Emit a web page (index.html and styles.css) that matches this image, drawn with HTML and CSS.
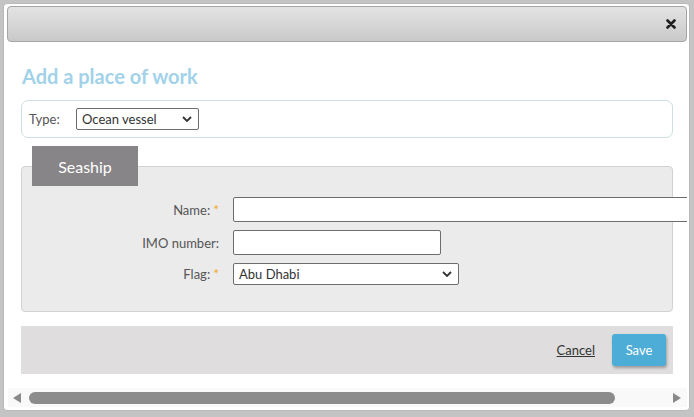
FILE: index.html
```html
<!DOCTYPE html>
<html lang="en">
<head>
    <meta charset="UTF-8">
    <meta name="viewport" content="width=device-width, initial-scale=1.0">
    <title>Add a place of work</title>
    <link rel="stylesheet" href="styles.css">
</head>
<body>
    <div class="dialog">
        <div class="titlebar">
            <button class="close-btn" title="Close">
                <svg width="10" height="10" viewBox="0 0 10 10">
                    <path d="M1.5 1.5 L8.5 8.5 M8.5 1.5 L1.5 8.5" stroke="#1e1e1e" stroke-width="2.6" stroke-linecap="round"/>
                </svg>
            </button>
        </div>

        <div class="dialog-content">
            <div class="content-inner">
                <h2 class="dialog-title">Add a place of work</h2>

                <div class="type-box">
                    <label class="type-label">Type:</label>
                    <div class="select-wrap type-select">
                        <select>
                            <option>Ocean vessel</option>
                        </select>
                        <svg class="chevron" width="10" height="6" viewBox="0 0 10 6">
                            <path d="M1 1 L5 5 L9 1" fill="none" stroke="#333" stroke-width="1.8"/>
                        </svg>
                    </div>
                </div>

                <div class="section-tab">Seaship</div>
                <div class="section-panel">
                    <div class="form-row">
                        <label class="form-label">Name: <span class="req">*</span></label>
                        <input class="text-input name-input" type="text">
                    </div>
                    <div class="form-row">
                        <label class="form-label">IMO number:</label>
                        <input class="text-input imo-input" type="text">
                    </div>
                    <div class="form-row">
                        <label class="form-label">Flag: <span class="req">*</span></label>
                        <div class="select-wrap flag-select">
                            <select>
                                <option>Abu Dhabi</option>
                            </select>
                            <svg class="chevron" width="10" height="6" viewBox="0 0 10 6">
                                <path d="M1 1 L5 5 L9 1" fill="none" stroke="#333" stroke-width="1.8"/>
                            </svg>
                        </div>
                    </div>
                </div>

                <div class="dialog-footer">
                    <a href="#" class="cancel-link">Cancel</a>
                    <button class="save-btn">Save</button>
                </div>
            </div>
        </div>

        <div class="hscroll">
            <span class="arrow arrow-left"></span>
            <div class="scroll-track">
                <div class="scroll-thumb"></div>
            </div>
            <span class="arrow arrow-right"></span>
        </div>
    </div>
</body>
</html>
```

FILE: styles.css
```css
html, body { margin: 0; padding: 0; }
body {
    background: #c4c4c4;
    font-family: Lato, "Open Sans", sans-serif;
    font-size: 13px;
    color: #555;
    width: 694px;
    height: 417px;
    overflow: hidden;
    padding: 3px 0 0 3px;
    box-sizing: border-box;
}

.dialog {
    width: 687px;
    height: 408px;
    box-sizing: border-box;
    background: #fff;
    border: 1px solid #b9b9b9;
    border-radius: 4px;
    padding: 2px 2px 0 3px;
    display: flex;
    flex-direction: column;
}

.titlebar {
    height: 36px;
    box-sizing: border-box;
    border: 1px solid #a5a5a5;
    border-radius: 4px;
    background: linear-gradient(#e3e3e3, #c9c9c9);
    display: flex;
    align-items: center;
    justify-content: flex-end;
    padding-right: 10px;
    flex: none;
}
.close-btn {
    border: none;
    background: none;
    padding: 0;
    width: 10px;
    height: 10px;
    display: flex;
    cursor: pointer;
}

.dialog-content {
    flex: 1;
    overflow: hidden;
    margin-left: -2px;
}
.content-inner {
    width: 652px;
    padding-left: 16px;
}

.dialog-title {
    margin: 22px 0 12px 1px;
    font-size: 20px;
    line-height: 24px;
    font-weight: bold;
    color: #a2d2e9;
}

.type-box {
    height: 38px;
    box-sizing: border-box;
    border: 1px solid #cde0e1;
    border-radius: 7px;
    display: flex;
    align-items: center;
    padding-left: 7px;
}
.type-label {
    width: 47px;
    color: #555;
}

.select-wrap {
    position: relative;
    height: 22px;
}
.select-wrap select {
    appearance: none;
    -webkit-appearance: none;
    width: 100%;
    height: 100%;
    box-sizing: border-box;
    border: 1px solid #6d6d6d;
    border-radius: 2px;
    background: #fff;
    font-family: inherit;
    font-size: 13px;
    color: #333;
    padding: 0 0 0 5px;
    margin: 0;
}
.select-wrap .chevron {
    position: absolute;
    right: 7px;
    top: 8px;
    pointer-events: none;
}
.type-select { width: 123px; }
.flag-select { width: 226px; }

.section-tab {
    position: relative;
    z-index: 1;
    margin: 8px 0 0 11px;
    width: 106px;
    height: 40px;
    background: #878587;
    color: #fff;
    font-size: 16px;
    display: flex;
    align-items: center;
    justify-content: center;
}
.section-panel {
    margin-top: -20px;
    height: 146px;
    box-sizing: border-box;
    background: #ebebeb;
    border: 1px solid #d2d2d2;
    border-radius: 4px;
    padding-top: 30px;
    display: flex;
    flex-direction: column;
    gap: 8px;
}

.form-row {
    display: grid;
    grid-template-columns: 197px auto;
    column-gap: 14px;
    align-items: center;
}
.form-label {
    text-align: right;
    color: #555;
}
.req { color: #f5a623; }

.text-input {
    height: 25px;
    box-sizing: border-box;
    border: 1px solid #6d6d6d;
    border-radius: 2px;
    background: #fff;
    margin: 0;
}
.name-input { width: 470px; }
.imo-input { width: 208px; }

.dialog-footer {
    margin-top: 14px;
    height: 48px;
    background: #dfdddd;
    display: flex;
    align-items: center;
    justify-content: flex-end;
    gap: 17px;
    padding-right: 7px;
}
.cancel-link {
    color: #333;
    text-decoration: underline;
    font-size: 13px;
}
.save-btn {
    width: 54px;
    height: 32px;
    border: none;
    border-radius: 3px;
    background: #4eadd6;
    color: #fff;
    font-family: inherit;
    font-size: 13px;
    box-shadow: 1px 2px 3px rgba(0, 0, 0, 0.3);
    cursor: pointer;
}

.hscroll {
    flex: none;
    height: 19px;
    margin: 0 0 3px 1px;
    background: #f9f9f9;
    display: flex;
    align-items: center;
    padding: 0 4px;
}
.arrow {
    width: 0;
    height: 0;
    border-top: 5px solid transparent;
    border-bottom: 5px solid transparent;
}
.arrow-left { border-right: 8px solid #8a8a8a; margin-left: 1px; }
.arrow-right { border-left: 8px solid #8a8a8a; margin-right: 2px; }
.scroll-track {
    flex: 1;
    margin: 0 58px 0 8px;
}
.scroll-thumb {
    height: 12px;
    border-radius: 6px;
    background: #8c8c8c;
}
```
